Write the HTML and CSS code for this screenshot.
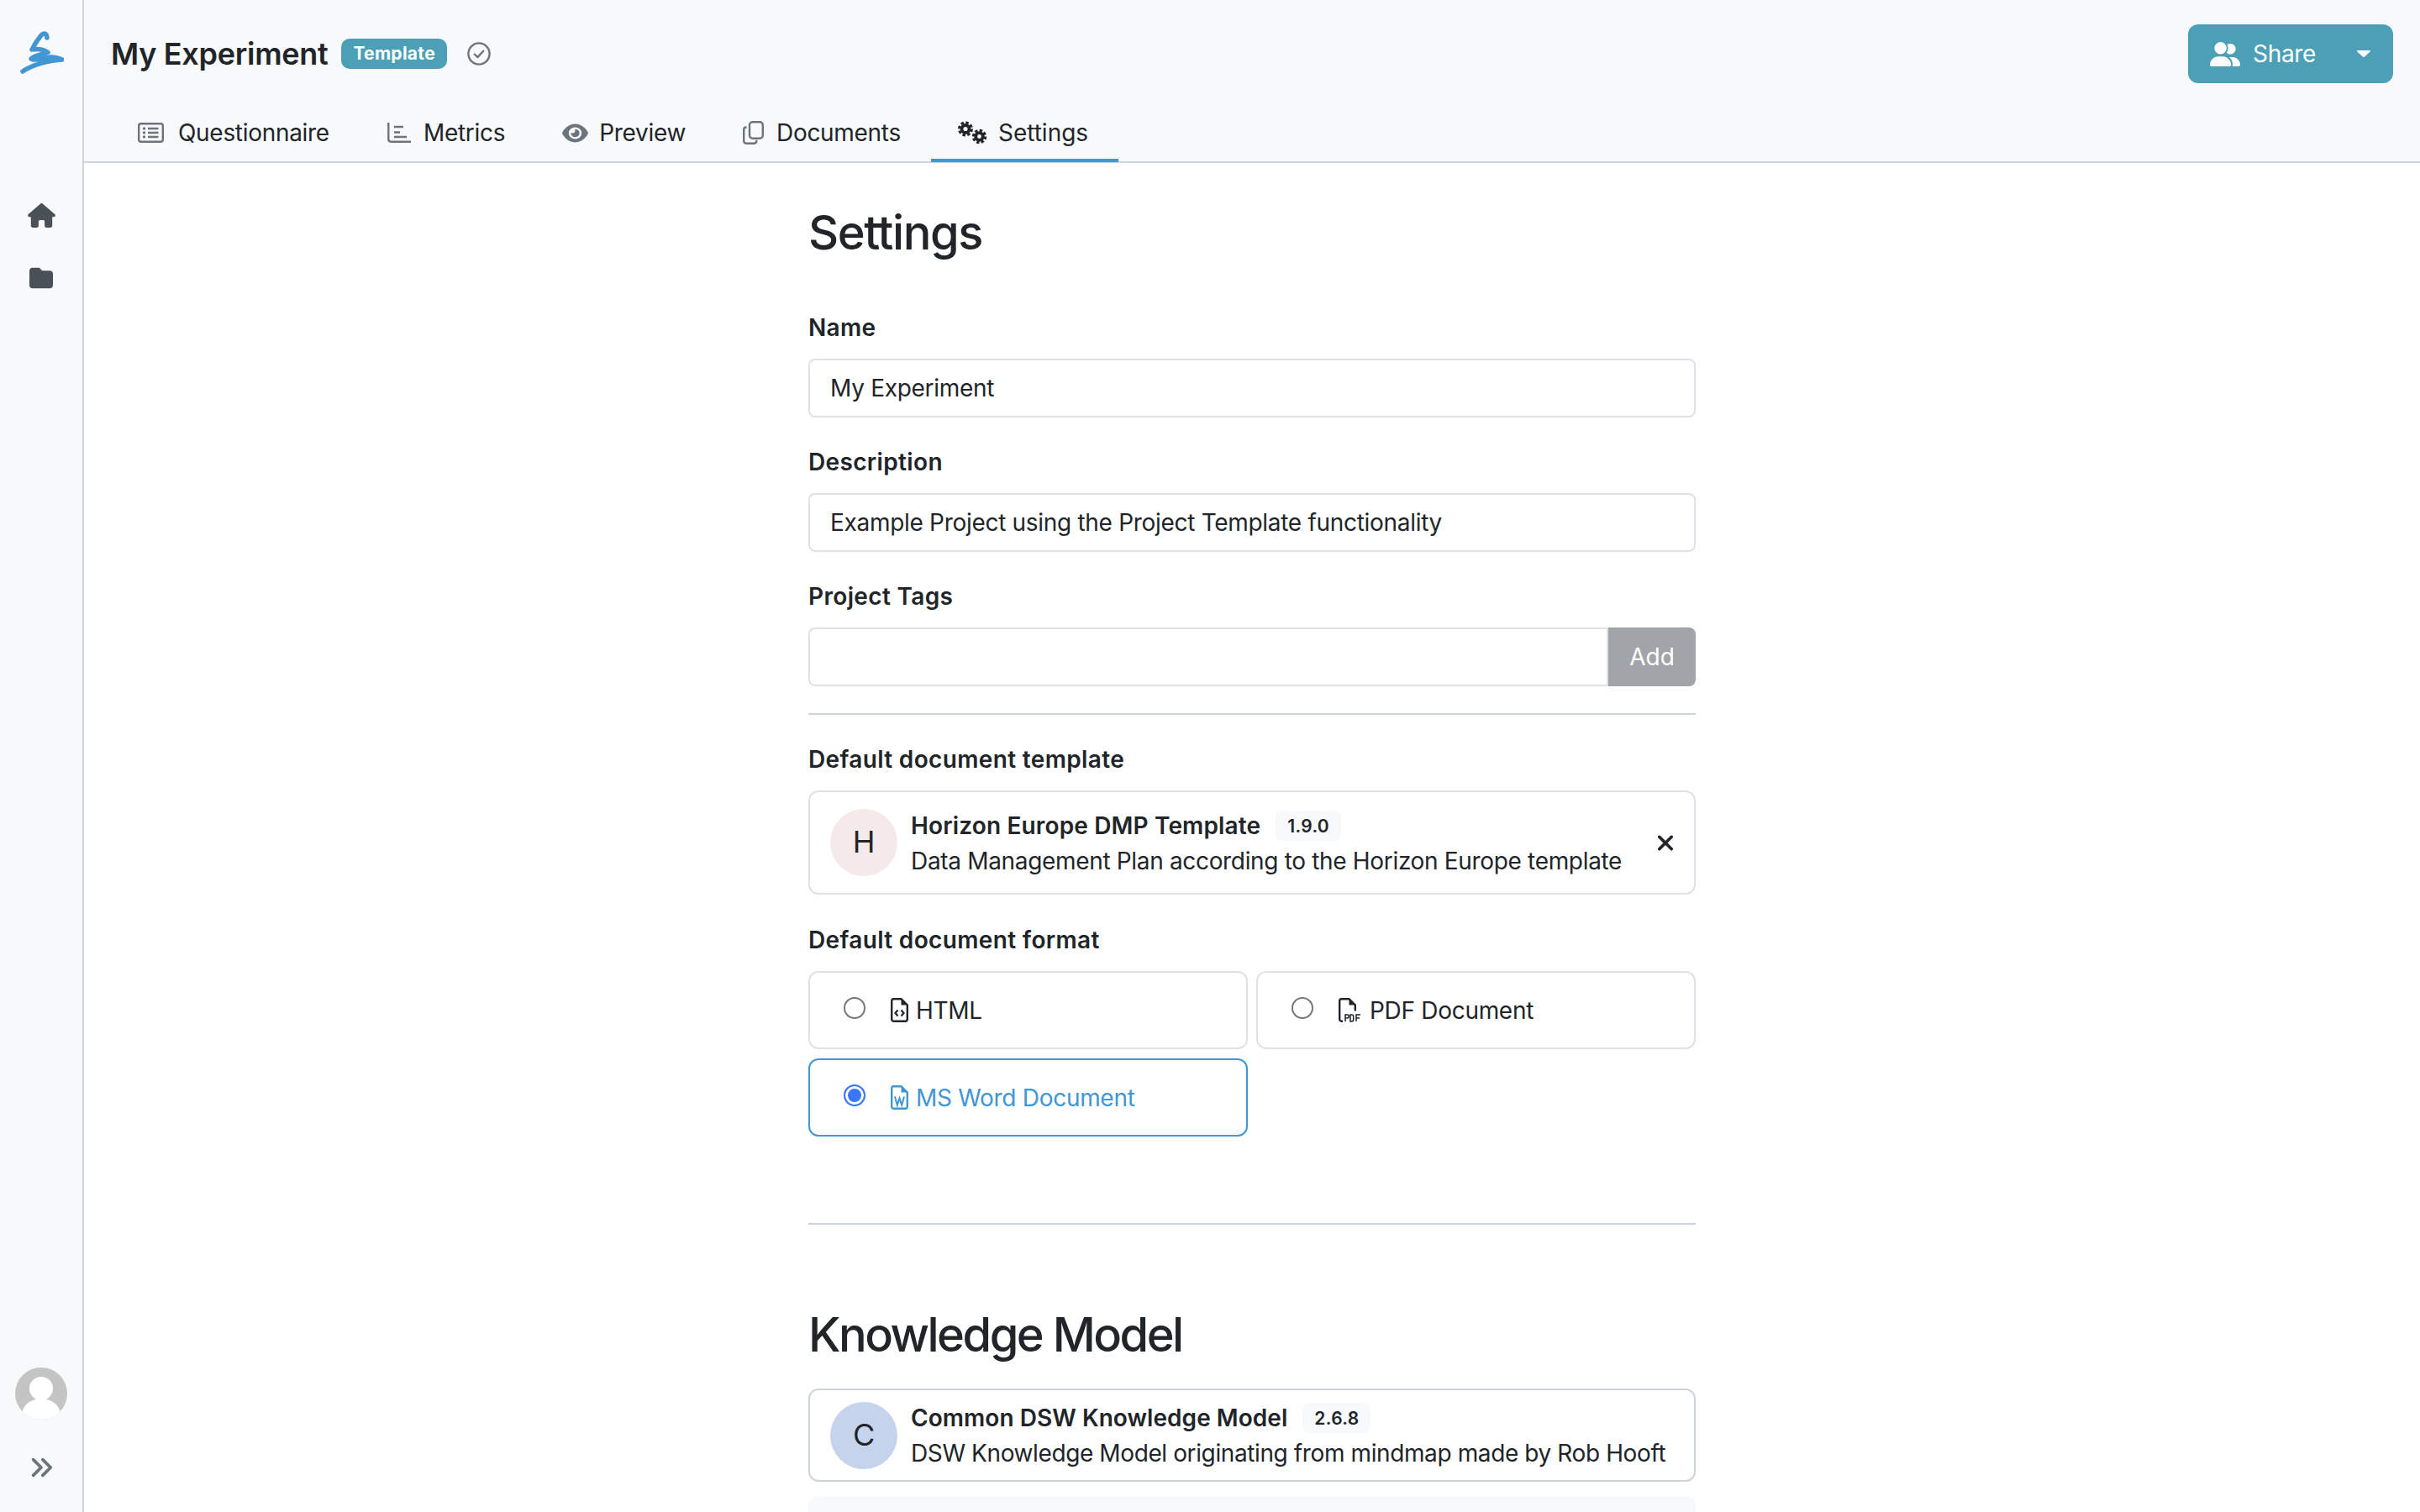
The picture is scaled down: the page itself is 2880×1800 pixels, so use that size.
FILE: index.html
```html
<!DOCTYPE html>
<html lang="en">
<head>
    <meta charset="UTF-8">
    <meta name="viewport" content="width=device-width, initial-scale=1.0">
    <title>My Experiment - Settings</title>
    <link rel="stylesheet" href="styles.css">
</head>
<body>
    <aside class="sidebar">
        <a class="logo" href="#">
            <svg viewBox="0 0 52 52" width="52" height="52"><path d="M32 9 C31.500 3.500 28 2.500 25 6 C21 11 17 17 14 23 C20 22 28 23 33 26.500 C27 29 16 29.500 13 34 C19 37 29 33 36 32 C40 31.500 45 33 50 35 C35 35.500 15 41 3 49" fill="none" stroke="#4296d2" stroke-width="5.500" stroke-linecap="round" stroke-linejoin="round"/></svg>
        </a>
        <nav class="side-nav">
            <a href="#"><svg class="side-home" viewBox="0 0 576 512"><path d="M575.8 255.5c0 18-15 32.1-32 32.1h-32l.7 160.2c0 2.7-.2 5.4-.5 8.1V472c0 22.1-17.9 40-40 40H456c-1.1 0-2.2 0-3.3-.1c-1.4 .1-2.8 .1-4.2 .1H416 392c-22.1 0-40-17.9-40-40V448 384c0-17.7-14.3-32-32-32H256c-17.7 0-32 14.3-32 32v64 24c0 22.1-17.9 40-40 40H160 128.1c-1.5 0-3-.1-4.5-.2c-1.2 .1-2.4 .2-3.6 .2H104c-22.1 0-40-17.9-40-40V360c0-.9 0-1.9 .1-2.8V287.6H32c-18 0-32-14-32-32.1c0-9 3-17 10-24L266.4 8c7-7 15-8 22-8s15 2 21 7L564.8 231.5c8 7 12 15 11 24z"/></svg></a>
            <a href="#"><svg class="side-folder" viewBox="0 0 512 512"><path d="M64 480H448c35.3 0 64-28.7 64-64V160c0-35.3-28.7-64-64-64H288c-10.1 0-19.6-4.7-25.6-12.8L243.2 57.6C231.1 41.5 212.1 32 192 32H64C28.7 32 0 60.7 0 96V416c0 35.3 28.7 64 64 64z"/></svg></a>
        </nav>
        <div class="side-bottom">
            <svg class="user-pic" viewBox="0 0 62 62"><defs><clipPath id="picClip"><circle cx="31" cy="31" r="31"/></clipPath></defs><g clip-path="url(#picClip)"><rect width="62" height="62" fill="#c4c4c4"/><circle cx="31" cy="25" r="14" fill="#fff"/><ellipse cx="31" cy="56" rx="23" ry="19" fill="#fff"/></g></svg>
            <svg class="collapse" viewBox="0 0 512 512"><path d="M470.6 278.6c12.5-12.5 12.5-32.8 0-45.3l-160-160c-12.5-12.5-32.8-12.5-45.3 0s-12.5 32.8 0 45.3L402.7 256 265.4 393.4c-12.5 12.5-12.5 32.8 0 45.3s32.8 12.5 45.3 0l160-160zm-352 160l160-160c12.5-12.5 12.5-32.8 0-45.3l-160-160c-12.5-12.5-32.8-12.5-45.3 0s-12.5 32.8 0 45.3L210.7 256 73.4 393.4c-12.5 12.5-12.5 32.8 0 45.3s32.8 12.5 45.3 0z"/></svg>
        </div>
    </aside>

    <div class="main">
        <header class="top">
            <div class="title-row">
                <div class="title-left">
                    <h1>My Experiment</h1>
                    <span class="badge">Template</span>
                    <svg class="saved" viewBox="0 0 28 28"><circle cx="14" cy="14" r="12.6" fill="none" stroke="#6c757d" stroke-width="2.4"/><path d="M8.8 14.5l3.6 3.6 6.8-7.4" fill="none" stroke="#6c757d" stroke-width="2.4" stroke-linecap="round" stroke-linejoin="round"/></svg>
                </div>
                <div class="share">
                    <svg class="share-icon" viewBox="0 0 640 512"><path d="M96 128a128 128 0 1 1 256 0A128 128 0 1 1 96 128zM0 482.3C0 383.8 79.8 304 178.3 304h91.4C368.2 304 448 383.8 448 482.3c0 16.4-13.3 29.7-29.7 29.7H29.7C13.3 512 0 498.7 0 482.3zM609.3 512H471.4c5.4-9.4 8.6-20.3 8.6-32v-8c0-60.7-27.1-115.2-69.8-151.8c2.4-.1 4.7-.2 7.1-.2h61.4C567.8 320 640 392.2 640 481.3c0 17-13.8 30.7-30.7 30.7zM432 256c-31 0-59-12.6-79.3-32.9C372.4 196.5 384 163.6 384 128c0-26.8-6.6-52.1-18.3-74.3C384.3 40.1 407.2 32 432 32c61.9 0 112 50.1 112 112s-50.1 112-112 112z"/></svg>
                    <span>Share</span>
                    <svg class="caret" viewBox="0 0 16 8"><path d="M1 0h14c.9 0 1.3 1 .7 1.6L8.7 7.7c-.4.4-1 .4-1.4 0L.3 1.6C-.3 1 .1 0 1 0z"/></svg>
                </div>
            </div>
            <nav class="tabs">
                <a href="#">
                    <svg class="tab-icon icon-wide" width="31" height="24" viewBox="0 0 31 24"><rect x="1.2" y="1.2" width="28.6" height="21.6" rx="2.5" fill="none" stroke="currentColor" stroke-width="2.4"/><circle cx="7.5" cy="7" r="1.7"/><circle cx="7.5" cy="12" r="1.7"/><circle cx="7.5" cy="17" r="1.7"/><path d="M12 7h12.5M12 12h12.5M12 17h12.5" stroke="currentColor" stroke-width="2.4"/></svg>
                    Questionnaire
                </a>
                <a href="#">
                    <svg class="tab-icon" width="28" height="24" viewBox="0 0 28 24"><path d="M1.3 0v19.5c0 1.800 1.200 3.200 3 3.200H28" fill="none" stroke="currentColor" stroke-width="2.400"/><path d="M8 5h11M8 11.500h7M8 17h15" stroke="currentColor" stroke-width="2.400"/></svg>
                    Metrics
                </a>
                <a href="#">
                    <svg class="tab-icon icon-tight" width="31" height="25" viewBox="0 0 576 512" preserveAspectRatio="none"><path d="M288 32c-80.800 0-145.500 36.800-192.600 80.600C48.600 156 17.300 208 2.500 243.700c-3.300 7.900-3.300 16.700 0 24.600C17.300 304 48.600 356 95.400 399.400C142.500 443.200 207.200 480 288 480s145.500-36.800 192.600-80.600c46.800-43.500 78.100-95.400 93-131.100c3.300-7.900 3.300-16.700 0-24.600c-14.900-35.700-46.200-87.700-93-131.100C433.500 68.800 368.800 32 288 32zM144 256a144 144 0 1 1 288 0 144 144 0 1 1 -288 0zm144-64c0 35.300-28.700 64-64 64c-7.100 0-13.900-1.200-20.300-3.300c-5.500-1.800-11.900 1.600-11.700 7.400c.3 6.900 1.300 13.800 3.200 20.700c13.700 51.200 66.400 81.600 117.600 67.900s81.600-66.400 67.900-117.600c-11.100-41.500-47.800-69.400-88.600-71.100c-5.800-.2-9.200 6.100-7.400 11.700c2.100 6.400 3.300 13.200 3.300 20.300z"/></svg>
                    Preview
                </a>
                <a href="#">
                    <svg class="tab-icon" width="25" height="28" viewBox="0 0 25 28"><rect x="8" y="1.200" width="15.800" height="19.600" rx="3.500" fill="none" stroke="currentColor" stroke-width="2.400"/><path d="M4.500 7.500H4c-1.600 0-2.800 1.200-2.800 2.800v13.500c0 1.600 1.200 2.900 2.800 2.900h9.500c1.600 0 2.800-1.300 2.800-2.900v-1" fill="none" stroke="currentColor" stroke-width="2.400"/></svg>
                    Documents
                </a>
                <a class="active" href="#">
                    <svg class="tab-icon icon-tight" width="35" height="28" viewBox="0 0 35 28"><g fill="none" stroke="currentColor"><circle cx="9" cy="9.500" r="4.500" stroke-width="3.800"/><circle cx="9" cy="9.500" r="7.500" stroke-width="3" stroke-dasharray="3.500 2.400"/><circle cx="25.500" cy="18.500" r="4.300" stroke-width="3.800"/><circle cx="25.500" cy="18.500" r="7.200" stroke-width="3" stroke-dasharray="3.400 2.250"/></g></svg>
                    Settings
                </a>
            </nav>
        </header>

        <main class="page">
            <div class="content">
                <h2 class="heading-first">Settings</h2>

                <div class="field">
                    <label>Name</label>
                    <input class="text-input" type="text" value="My Experiment">
                </div>
                <div class="field">
                    <label>Description</label>
                    <input class="text-input" type="text" value="Example Project using the Project Template functionality">
                </div>
                <div class="field tags-field">
                    <label>Project Tags</label>
                    <div class="tag-row">
                        <input class="text-input" type="text">
                        <button type="button">Add</button>
                    </div>
                </div>

                <hr class="rule">

                <div class="field template-field">
                    <label>Default document template</label>
                    <div class="item-card">
                        <div class="initial initial-h">H</div>
                        <div class="item-text">
                            <div class="item-name"><strong>Horizon Europe DMP Template</strong><span class="version">1.9.0</span></div>
                            <div class="item-desc">Data Management Plan according to the Horizon Europe template</div>
                        </div>
                        <svg class="remove" viewBox="0 0 384 512"><path d="M342.600 150.600c12.500-12.500 12.500-32.800 0-45.300s-32.800-12.500-45.300 0L192 210.700 86.600 105.400c-12.500-12.500-32.800-12.500-45.300 0s-12.500 32.800 0 45.300L146.700 256 41.400 361.400c-12.500 12.500-12.500 32.800 0 45.300s32.800 12.500 45.300 0L192 301.300 297.400 406.600c12.500 12.500 32.800 12.500 45.300 0s12.500-32.800 0-45.300L237.300 256 342.600 150.600z"/></svg>
                    </div>
                </div>

                <div class="field">
                    <label>Default document format</label>
                    <div class="formats">
                        <label class="format">
                            <input type="radio" name="format">
                            <svg class="file-icon" width="21" height="29" viewBox="0 0 21 29"><path d="M3.500 1.200h9l7.300 7.300v16.800a2.500 2.500 0 0 1-2.500 2.500H3.500A2.500 2.500 0 0 1 1.200 25.300V3.700a2.500 2.500 0 0 1 2.300-2.500z" fill="none" stroke="currentColor" stroke-width="2.400"/><path d="M12.500 1.200v7.300h7.300z"/><path d="M8.500 14.500L5.500 18l3 3.500M12.500 14.500l3 3.500-3 3.500" fill="none" stroke="currentColor" stroke-width="2.200"/></svg>
                            HTML
                        </label>
                        <label class="format">
                            <input type="radio" name="format">
                            <svg class="file-icon pdf-icon" width="27" height="29" viewBox="0 0 27 29"><path d="M5 27.800H3.500a2.300 2.300 0 0 1-2.300-2.500V3.700a2.500 2.500 0 0 1 2.300-2.500h9l7.300 7.300v7" fill="none" stroke="currentColor" stroke-width="2.400"/><path d="M12.500 1.200v7.300h7.300z"/><path d="M8 28v-8h2.200a2 2 0 0 1 0 4H8M14 20v8h1.500a2.200 2.200 0 0 0 2.200-2.200v-3.600a2.200 2.200 0 0 0-2.200-2.200zM21 28v-8h5M21 24h4" fill="none" stroke="currentColor" stroke-width="1.500"/></svg>
                            PDF Document
                        </label>
                        <label class="format selected">
                            <input type="radio" name="format" checked>
                            <svg class="file-icon" width="21" height="29" viewBox="0 0 21 29"><path d="M3.500 1.200h9l7.300 7.300v16.800a2.500 2.500 0 0 1-2.500 2.500H3.500A2.500 2.500 0 0 1 1.200 25.300V3.700a2.500 2.500 0 0 1 2.300-2.500z" fill="none" stroke="currentColor" stroke-width="2.400"/><path d="M12.500 1.200v7.300h7.300z"/><path d="M5 13.500l2.800 10 2.700-8 2.700 8 2.800-10" fill="none" stroke="currentColor" stroke-width="2"/></svg>
                            MS Word Document
                        </label>
                    </div>
                </div>

                <hr class="rule rule-bottom">

                <h2 class="heading-km">Knowledge Model</h2>

                <div class="item-card km-card">
                    <div class="initial initial-c">C</div>
                    <div class="item-text">
                        <div class="item-name"><strong>Common DSW Knowledge Model</strong><span class="version">2.6.8</span></div>
                        <div class="item-desc">DSW Knowledge Model originating from mindmap made by Rob Hooft</div>
                    </div>
                </div>
                <div class="km-extra"></div>
            </div>
        </main>
    </div>
</body>
</html>
```

FILE: styles.css
```css
* {
    box-sizing: border-box;
}
html, body {
    height: 100%;
}
body {
    margin: 0;
    display: flex;
    overflow: hidden;
    background-color: #fff;
    color: #212529;
    font-family: Inter, "Noto Sans", sans-serif;
    font-size: 28px;
    line-height: 42px;
    letter-spacing: -0.3px;
}
a {
    color: inherit;
    text-decoration: none;
}

/* sidebar */
.sidebar {
    width: 100px;
    flex-shrink: 0;
    display: flex;
    flex-direction: column;
    align-items: center;
    background-color: #f8f9fa;
    border-right: 2px solid #ced4da;
}
.logo {
    display: block;
    height: 52px;
    margin-top: 36px;
    margin-left: 2px;
}
.side-nav {
    display: flex;
    flex-direction: column;
    align-items: center;
    margin-top: 154px;
    gap: 46px;
}
.side-nav a {
    display: block;
    height: 29px;
}
.side-nav svg {
    display: block;
    fill: #495057;
}
.side-home {
    width: 33px;
    height: 29px;
}
.side-folder {
    width: 28px;
    height: 28px;
}
.side-bottom {
    margin-top: auto;
    display: flex;
    flex-direction: column;
    align-items: center;
    padding-bottom: 38px;
}
.user-pic {
    width: 62px;
    height: 62px;
}
.collapse {
    width: 30px;
    height: 30px;
    margin-top: 42px;
    fill: #6c757d;
}

/* top bar */
.main {
    flex: 1;
    min-width: 0;
    display: flex;
    flex-direction: column;
}
.top {
    height: 194px;
    flex-shrink: 0;
    display: flex;
    flex-direction: column;
    background-color: #f8f9fa;
    border-bottom: 2px solid #ced4da;
}
.title-row {
    display: flex;
    flex-shrink: 0;
    justify-content: space-between;
    align-items: flex-start;
    padding: 29px 32px 0;
    height: 131px;
}
.title-left {
    display: flex;
    align-items: center;
    height: 70px;
}
h1 {
    margin: 0;
    font-size: 36px;
    font-weight: 600;
}
.badge {
    height: 36px;
    margin-left: 16px;
    padding: 0 14px;
    border-radius: 10px;
    background-color: #4ba0b6;
    color: #fff;
    font-size: 21px;
    font-weight: 700;
    line-height: 36px;
    letter-spacing: 0.3px;
}
.saved {
    width: 28px;
    height: 28px;
    margin-left: 24px;
}
.share {
    width: 244px;
    height: 70px;
    display: flex;
    align-items: center;
    padding-left: 26px;
    border-radius: 12px;
    background-color: #4ba0b6;
    color: #fff;
    font-size: 28px;
}
.share-icon {
    width: 36px;
    height: 29px;
    margin-right: 15px;
    fill: #fff;
}
.caret {
    width: 16px;
    height: 8px;
    margin-left: 49px;
    fill: #fff;
}
.tabs {
    display: flex;
    flex-shrink: 0;
    height: 62px;
    gap: 4px;
    padding-left: 32px;
}
.tabs a {
    display: flex;
    align-items: center;
    gap: 15px;
    padding: 0 32px 8px;
    height: 62px;
    color: #212529;
}
.tabs a:first-child {
    margin-right: 1px;
}
.tab-icon {
    fill: #6c757d;
    color: #6c757d;
}
.icon-wide {
    margin-right: 2px;
}
.icon-tight {
    margin-right: -2px;
}
.tabs a.active {
    border-bottom: 4px solid #4296d2;
    padding: 0 36px 4px 32px;
    letter-spacing: 0;
}
.tabs a.active .tab-icon {
    fill: #212529;
    color: #212529;
}

/* page content */
.page {
    flex: 1;
    overflow: hidden;
}
.content {
    width: 1056px;
    margin-left: 862px;
}
h2 {
    margin: 0;
    font-size: 56px;
    font-weight: 500;
    line-height: 68px;
}
.heading-first {
    margin-top: 49px;
    margin-bottom: 58px;
    letter-spacing: -1.4px;
}
.field {
    margin-bottom: 32px;
}
.template-field {
    margin-bottom: 33px;
}
.field > label {
    display: block;
    margin-bottom: 16px;
    font-weight: 600;
    letter-spacing: 0.35px;
}
.text-input {
    display: block;
    width: 100%;
    height: 70px;
    padding: 0 24px;
    border: 2px solid #dee2e6;
    border-radius: 8px;
    background-color: #fff;
    color: #212529;
    font-family: inherit;
    font-size: 28px;
    letter-spacing: -0.3px;
    outline: none;
}
.tags-field {
    margin-bottom: 32px;
}
.tag-row {
    display: flex;
}
.tag-row .text-input {
    flex: 1;
    border-radius: 8px 0 0 8px;
}
.tag-row button {
    width: 104px;
    height: 70px;
    padding: 0;
    border: none;
    border-radius: 0 8px 8px 0;
    background-color: #a1a5a9;
    color: #fff;
    font-family: inherit;
    font-size: 28px;
}
.rule {
    height: 2px;
    margin: 0 0 32px;
    border: none;
    background-color: #ced4da;
}
.rule-bottom {
    margin: 103px 0 97px;
}
.item-card {
    display: flex;
    align-items: center;
    height: 124px;
    padding: 0 24px;
    border: 2px solid #dee2e6;
    border-radius: 12px;
}
.initial {
    width: 80px;
    height: 80px;
    flex-shrink: 0;
    margin-right: 16px;
    border-radius: 50%;
    text-align: center;
    font-size: 36px;
    line-height: 78px;
}
.initial-h {
    background-color: #f6e9e9;
}
.initial-c {
    background-color: #c5d4ec;
}
.item-text {
    flex: 1;
    min-width: 0;
    padding-top: 1px;
}
.item-name {
    display: flex;
    align-items: center;
    height: 42px;
}
.item-name strong {
    font-weight: 600;
    letter-spacing: 0.15px;
}
.item-desc {
    letter-spacing: -0.33px;
}
.km-card .item-desc {
    letter-spacing: -0.39px;
}
.km-card .item-name strong {
    letter-spacing: 0.05px;
}
.version {
    height: 36px;
    margin-left: 18px;
    padding: 0 14px;
    border-radius: 8px;
    background-color: #f8f9fa;
    font-size: 21px;
    font-weight: 600;
    line-height: 38px;
    letter-spacing: 0.3px;
}
.remove {
    width: 22px;
    height: 29px;
    margin-right: -1px;
    fill: #212529;
}
.formats {
    display: grid;
    grid-template-columns: 1fr 1fr;
    gap: 11px 10px;
}
.format {
    display: flex;
    align-items: center;
    height: 93px;
    padding-left: 40px;
    border: 2px solid #dee2e6;
    border-radius: 12px;
}
.format input {
    appearance: none;
    width: 26px;
    height: 26px;
    margin: -5px 30px 0 0;
    border: 2px solid #767676;
    border-radius: 50%;
    background-color: #fff;
}
.format input:checked {
    border-color: #3b76f6;
    background-color: #3b76f6;
    box-shadow: inset 0 0 0 3px #fff;
}
.file-icon {
    margin-right: 9px;
    fill: currentColor;
}
.pdf-icon {
    margin-right: 10px;
}
.format.selected {
    border-color: #4296d2;
    color: #4296d2;
}
.km-card {
    height: 111px;
    border-color: #ced4da;
}
.heading-km {
    margin-bottom: 30px;
    letter-spacing: -2.5px;
}
.km-extra {
    height: 200px;
    margin-top: 17px;
    border-radius: 12px;
    background-color: #f8f9fa;
}
```
